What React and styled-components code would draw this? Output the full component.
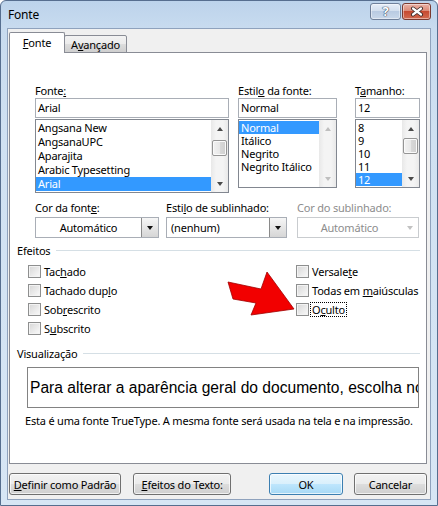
import React from "react";
import styled, { createGlobalStyle } from "styled-components";

const GlobalStyle = createGlobalStyle`
  html, body {
    margin: 0;
    padding: 0;
    background: #fff;
  }
  body {
    font-family: "Noto Sans", "DejaVu Sans", sans-serif;
    font-size: 11px;
    letter-spacing: -0.2px;
    color: #000;
  }
  * {
    box-sizing: border-box;
  }
`;

const Window = styled.div`
  position: relative;
  width: 438px;
  height: 506px;
  display: flex;
  flex-direction: column;
  border: 1px solid #566e8f;
  border-radius: 6px 6px 0 0;
  background: linear-gradient(180deg, #bcd3eb 0px, #c8dbef 27px, #d0e1f2 140px, #d7e6f5 100%);
  overflow: hidden;
`;

const TitleBar = styled.div`
  height: 27px;
  display: flex;
  align-items: flex-start;
  padding: 0 6px 0 7px;
`;

const Title = styled.div`
  line-height: 27px;
  font-size: 12px;
  color: #000;
`;

const CaptionGroup = styled.div`
  margin-left: auto;
  margin-top: 2px;
  display: flex;
  gap: 1px;
`;

const CaptionButton = styled.div`
  width: ${(p) => p.$w}px;
  height: 17px;
  border-radius: 3px;
  display: flex;
  align-items: center;
  justify-content: center;
  border: 1px solid ${(p) => (p.$close ? "#7a3a30" : "#6f809a")};
  background: ${(p) =>
    p.$close
      ? "linear-gradient(180deg, #eab2a6 0%, #dc8b78 45%, #c64a31 50%, #d36b50 100%)"
      : "linear-gradient(180deg, #e6eef8 0%, #d3dfee 45%, #b9cbe2 50%, #c9d8ea 100%)"};
  box-shadow: inset 0 0 0 1px rgba(255, 255, 255, 0.45);
  color: #fff;
  font-weight: bold;
  font-size: 13px;
  line-height: 1;
  text-shadow: 0 0 1px #33445e, 0 0 1px #33445e, 0 0 1px #33445e;
`;

const Client = styled.div`
  flex: 1;
  margin: 0 6px 5px 6px;
  border: 1px solid #8fa2bd;
  background: #f0f0f0;
  padding: 3px 3px 4px 1px;
  display: flex;
  flex-direction: column;
`;

const TabStrip = styled.div`
  display: flex;
  align-items: flex-end;
  height: 21px;
  margin-bottom: -1px;
  position: relative;
  z-index: 1;
`;

const Tab = styled.div`
  height: ${(p) => (p.$active ? 21 : 18)}px;
  width: ${(p) => p.$w}px;
  border: 1px solid #898c95;
  border-bottom: ${(p) => (p.$active ? "none" : "1px solid #898c95")};
  margin-left: ${(p) => (p.$active ? 0 : -1)}px;
  border-radius: 2px 2px 0 0;
  background: ${(p) =>
    p.$active ? "#fff" : "linear-gradient(180deg, #f3f3f3 0%, #ebebeb 50%, #dddddd 51%, #cfcfcf 100%)"};
  display: flex;
  align-items: center;
  justify-content: center;
  padding-bottom: ${(p) => (p.$active ? 2 : 0)}px;
`;

const Key = styled.span`
  text-decoration: underline;
  text-underline-offset: 1px;
`;

const Panel = styled.div`
  height: 412px;
  border: 1px solid #898c95;
  background: #fff;
  padding: 30px 6px 0 7px;
  display: flex;
  flex-direction: column;
`;

const FieldRow = styled.div`
  display: flex;
  align-items: flex-start;
  margin-left: 18px;
  margin-top: ${(p) => p.$mt || 0}px;
`;

const Field = styled.div`
  display: flex;
  flex-direction: column;
  width: ${(p) => p.$w}px;
  margin-left: ${(p) => p.$ml || 0}px;
`;

const FieldLabel = styled.div`
  height: 15px;
  line-height: 15px;
  margin-bottom: ${(p) => (p.$gap ? 2 : 0)}px;
  color: ${(p) => (p.$disabled ? "#8d8d8d" : "#000")};
  white-space: nowrap;
`;

const TextBox = styled.div`
  height: 20px;
  border: 1px solid #a9aeb6;
  background: #fff;
  padding-left: 2px;
  line-height: 18px;
  margin-bottom: 1px;
`;

const ListBox = styled.div`
  height: ${(p) => p.$h}px;
  border: 1px solid #828790;
  background: #fff;
  display: flex;
`;

const Items = styled.div`
  flex: 1;
  padding-top: 1px;
  overflow: hidden;
`;

const Item = styled.div`
  height: ${(p) => p.$h}px;
  line-height: ${(p) => p.$h}px;
  padding-left: 2px;
  white-space: nowrap;
  background: ${(p) => (p.$selected ? "#3399ff" : "transparent")};
  color: ${(p) => (p.$selected ? "#fff" : "#000")};
`;

const ScrollBar = styled.div`
  width: 17px;
  display: flex;
  flex-direction: column;
  background: linear-gradient(90deg, #e8e8e8 0%, #f4f4f4 30%, #f4f4f4 70%, #e9e9e9 100%);
`;

const ScrollArrow = styled.div`
  height: 17px;
  display: flex;
  align-items: center;
  justify-content: center;
  &::before {
    content: "";
    width: 0;
    height: 0;
    border-left: 3.5px solid transparent;
    border-right: 3.5px solid transparent;
    ${(p) => (p.$down ? "border-top" : "border-bottom")}: 4px solid ${(p) =>
      p.$disabled ? "#bfbfbf" : "#4a4a4a"};
  }
`;

const ScrollTrack = styled.div`
  flex: 1;
  padding: ${(p) => p.$offset}px 1px 0 1px;
`;

const Thumb = styled.div`
  height: 16px;
  border: 1px solid #959595;
  border-radius: 2px;
  background: linear-gradient(90deg, #f2f2f2 0%, #e8e8e8 50%, #d9d9d9 51%, #cfcfcf 100%);
  box-shadow: inset 0 0 0 1px #fafafa;
`;

const Combo = styled.div`
  height: 21px;
  display: flex;
  border: 1px solid ${(p) => (p.$disabled ? "#c9cccf" : "#a9aeb6")};
  background: #fff;
  color: ${(p) => (p.$disabled ? "#8d8d8d" : "#000")};
`;

const ComboText = styled.div`
  flex: 1;
  line-height: 19px;
  padding-left: ${(p) => (p.$center ? 0 : 4)}px;
  text-align: ${(p) => (p.$center ? "center" : "left")};
  white-space: nowrap;
`;

const ComboButton = styled.div`
  width: 17px;
  display: flex;
  align-items: center;
  justify-content: center;
  border-left: 1px solid ${(p) => (p.$disabled ? "transparent" : "#8a8a8a")};
  background: ${(p) =>
    p.$disabled ? "transparent" : "linear-gradient(180deg, #f6f6f6 0%, #e6e6e6 50%, #d6d6d6 100%)"};
  &::before {
    content: "";
    width: 0;
    height: 0;
    border-left: 3.5px solid transparent;
    border-right: 3.5px solid transparent;
    border-top: 4px solid ${(p) => (p.$disabled ? "#c2c2c2" : "#111")};
  }
`;

const GroupHeader = styled.div`
  display: flex;
  align-items: center;
  height: 15px;
  margin-top: ${(p) => p.$mt}px;
  &::after {
    content: "";
    flex: 1;
    height: 1px;
    margin-left: 6px;
    background: #d5dfe5;
  }
`;

const CheckGrid = styled.div`
  display: flex;
  margin-top: 4px;
  margin-left: 11px;
`;

const CheckColumn = styled.div`
  display: flex;
  flex-direction: column;
  width: ${(p) => p.$w}px;
`;

const CheckRow = styled.div`
  height: 19px;
  display: flex;
  align-items: center;
  white-space: nowrap;
`;

const Box = styled.div`
  flex: none;
  width: 13px;
  height: 13px;
  border: 1px solid #8e8f8f;
  background: linear-gradient(135deg, #d6d6d6 0%, #ececec 60%, #fafafa 100%);
  box-shadow: inset 0 0 0 1px #f3f3f3;
  margin-right: 2px;
`;

const CheckLabel = styled.span`
  padding: 0 1px;
  line-height: 13px;
  outline: ${(p) => (p.$focus ? "1px dotted #000" : "none")};
`;

const Preview = styled.div`
  margin: 6px 0 0 10px;
  width: 392px;
  height: 41px;
  border: 1px solid #828282;
  background: #fff;
  overflow: hidden;
  white-space: nowrap;
  padding-left: 2px;
  font-family: "Liberation Sans", Arial, sans-serif;
  font-size: 15.6px;
  letter-spacing: 0;
  line-height: 39px;
`;

const Note = styled.div`
  margin: 5px 0 0 8px;
  line-height: 15px;
  white-space: nowrap;
`;

const ButtonRow = styled.div`
  display: flex;
  margin-top: 9px;
  gap: 12px;
`;

const Button = styled.div`
  width: ${(p) => p.$w}px;
  height: 22px;
  margin-left: ${(p) => p.$ml || 0}px;
  border-radius: 3px;
  border: 1px solid ${(p) => (p.$default ? "#3c7fb1" : "#707070")};
  background: ${(p) =>
    p.$default
      ? "linear-gradient(180deg, #eaf6fd 0%, #d9f0fc 50%, #bee6fd 51%, #a7d9f5 100%)"
      : "linear-gradient(180deg, #f2f2f2 0%, #ebebeb 50%, #dddddd 51%, #cfcfcf 100%)"};
  box-shadow: inset 0 0 0 1px rgba(255, 255, 255, 0.7);
  display: flex;
  align-items: center;
  justify-content: center;
  white-space: nowrap;
`;

const Pointer = styled.svg`
  position: absolute;
  left: 218px;
  top: 264px;
  z-index: 5;
`;

const fontNames = ["Angsana New", "AngsanaUPC", "Aparajita", "Arabic Typesetting", "Arial"];
const styleNames = ["Normal", "Itálico", "Negrito", "Negrito Itálico"];
const sizes = ["8", "9", "10", "11", "12"];

function Scroll({ offset, disabled }) {
  return (
    <ScrollBar>
      <ScrollArrow $disabled={disabled} />
      <ScrollTrack $offset={offset}>{!disabled && <Thumb />}</ScrollTrack>
      <ScrollArrow $down $disabled={disabled} />
    </ScrollBar>
  );
}

function Check({ children, focus }) {
  return (
    <CheckRow>
      <Box />
      <CheckLabel $focus={focus}>{children}</CheckLabel>
    </CheckRow>
  );
}

export default function App() {
  return (
    <>
      <GlobalStyle />
      <Window>
        <TitleBar>
          <Title>Fonte</Title>
          <CaptionGroup>
            <CaptionButton $w={31}>?</CaptionButton>
            <CaptionButton $w={29} $close>
              <svg width="14" height="11" viewBox="-7 -5.5 14 11">
                <path d="M-4 -3 L4 3 M4 -3 L-4 3" stroke="#3a2a28" strokeWidth="4" strokeLinecap="round" />
                <path d="M-4 -3 L4 3 M4 -3 L-4 3" stroke="#fff" strokeWidth="2.2" strokeLinecap="round" />
              </svg>
            </CaptionButton>
          </CaptionGroup>
        </TitleBar>

        <Client>
          <TabStrip>
            <Tab $active $w={56}>
              <span>
                <Key>F</Key>onte
              </span>
            </Tab>
            <Tab $w={63}>
              <span>
                A<Key>v</Key>ançado
              </span>
            </Tab>
          </TabStrip>

          <Panel>
            <FieldRow>
              <Field $w={194}>
                <FieldLabel>
                  Fonte<Key>:</Key>
                </FieldLabel>
                <TextBox>Arial</TextBox>
                <ListBox $h={74}>
                  <Items>
                    {fontNames.map((n) => (
                      <Item key={n} $h={14} $selected={n === "Arial"}>
                        {n}
                      </Item>
                    ))}
                  </Items>
                  <Scroll offset={3} />
                </ListBox>
              </Field>
              <Field $w={99} $ml={9}>
                <FieldLabel>
                  Estil<Key>o</Key> da fonte:
                </FieldLabel>
                <TextBox>Normal</TextBox>
                <ListBox $h={69}>
                  <Items>
                    {styleNames.map((n) => (
                      <Item key={n} $h={13} $selected={n === "Normal"}>
                        {n}
                      </Item>
                    ))}
                  </Items>
                  <Scroll disabled />
                </ListBox>
              </Field>
              <Field $w={65} $ml={18}>
                <FieldLabel>
                  T<Key>a</Key>manho:
                </FieldLabel>
                <TextBox>12</TextBox>
                <ListBox $h={69}>
                  <Items>
                    {sizes.map((n) => (
                      <Item key={n} $h={13} $selected={n === "12"}>
                        {n}
                      </Item>
                    ))}
                  </Items>
                  <Scroll offset={1} />
                </ListBox>
              </Field>
            </FieldRow>

            <FieldRow $mt={7}>
              <Field $w={124}>
                <FieldLabel $gap>
                  Cor da font<Key>e</Key>:
                </FieldLabel>
                <Combo>
                  <ComboText $center>Automático</ComboText>
                  <ComboButton />
                </Combo>
              </Field>
              <Field $w={121} $ml={7}>
                <FieldLabel $gap>
                  Esti<Key>l</Key>o de sublinhado:
                </FieldLabel>
                <Combo>
                  <ComboText>(nenhum)</ComboText>
                  <ComboButton />
                </Combo>
              </Field>
              <Field $w={122} $ml={10}>
                <FieldLabel $gap $disabled>
                  Cor do sublinhado:
                </FieldLabel>
                <Combo $disabled>
                  <ComboText $center>Automático</ComboText>
                  <ComboButton $disabled />
                </Combo>
              </Field>
            </FieldRow>

            <GroupHeader $mt={5}>Efeitos</GroupHeader>
            <CheckGrid>
              <CheckColumn $w={268}>
                <Check>
                  Tac<Key>h</Key>ado
                </Check>
                <Check>
                  Tachado dup<Key>l</Key>o
                </Check>
                <Check>
                  Sob<Key>r</Key>escrito
                </Check>
                <Check>
                  S<Key>u</Key>bscrito
                </Check>
              </CheckColumn>
              <CheckColumn $w={124}>
                <Check>
                  Versale<Key>t</Key>e
                </Check>
                <Check>
                  Todas em <Key>m</Key>aiúsculas
                </Check>
                <Check focus>
                  O<Key>c</Key>ulto
                </Check>
              </CheckColumn>
            </CheckGrid>

            <GroupHeader $mt={8}>Visualização</GroupHeader>
            <Preview>Para alterar a aparência geral do documento, escolha novo Tema na guia Design.</Preview>
            <Note>Esta é uma fonte TrueType. A mesma fonte será usada na tela e na impressão.</Note>
          </Panel>

          <ButtonRow>
            <Button $w={113}>
              <span>
                <Key>D</Key>efinir como Padrão
              </span>
            </Button>
            <Button $w={99}>
              <span>
                <Key>E</Key>feitos do Texto:
              </span>
            </Button>
            <Button $w={74} $ml={26} $default>
              OK
            </Button>
            <Button $w={74} $ml={-1}>
              Cancelar
            </Button>
          </ButtonRow>
        </Client>

        <Pointer width="82" height="58" viewBox="219 265 82 58">
          <polygon
            points="294,309 267,272 261,289 228,282 233,299 256,303 251,315"
            fill="#f20000"
            stroke="#a00000"
            strokeWidth="0.8"
            strokeLinejoin="round"
          />
        </Pointer>
      </Window>
    </>
  );
}
